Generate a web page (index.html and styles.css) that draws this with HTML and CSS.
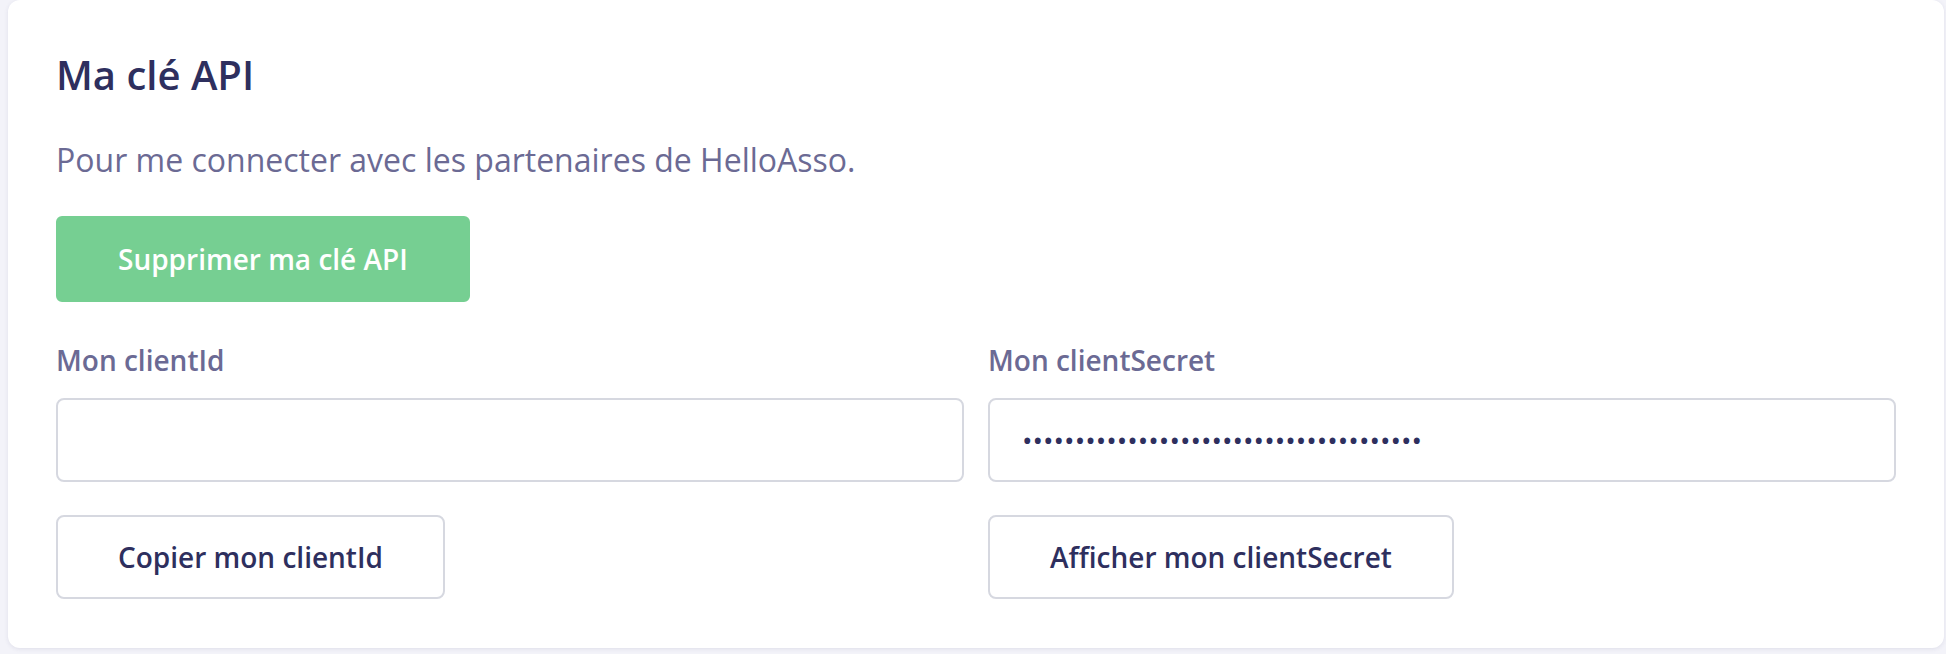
FILE: index.html
```html
<!DOCTYPE html>
<html lang="fr">
<head>
<meta charset="utf-8">
<title>Ma clé API</title>
<link rel="stylesheet" href="styles.css">
</head>
<body>
<div class="page">
  <section class="card">
    <h1 class="card-title">Ma clé API</h1>
    <p class="card-text">Pour me connecter avec les partenaires de HelloAsso.</p>
    <button class="btn btn-primary" type="button">Supprimer ma clé API</button>
    <div class="fields">
      <div class="field">
        <label class="field-label" for="clientId">Mon clientId</label>
        <input class="field-input" id="clientId" type="text" value="">
        <button class="btn btn-outline" type="button">Copier mon clientId</button>
      </div>
      <div class="field">
        <label class="field-label" for="clientSecret">Mon clientSecret</label>
        <input class="field-input" id="clientSecret" type="password" value="abcdefghijklmnopqrstuvwxyz0123456789AB">
        <button class="btn btn-outline" type="button">Afficher mon clientSecret</button>
      </div>
    </div>
  </section>
</div>
</body>
</html>
```

FILE: styles.css
```css
* {
  box-sizing: border-box;
}

html, body {
  margin: 0;
  padding: 0;
}

body {
  background: #f3f3f9;
  font-family: "Open Sans", "Noto Sans", sans-serif;
  color: #2e2f5e;
}

.page {
  padding: 0 2px 6px 8px;
}

.card {
  background: #ffffff;
  border-radius: 12px;
  box-shadow: 0 1px 4px rgba(46, 47, 94, 0.10);
  padding: 48px 48px 49px 48px;
  height: 648px;
}

.card-title {
  margin: 0 0 36px;
  font-size: 40px;
  line-height: 54px;
  font-weight: 600;
  color: #2e2f5e;
}

.card-text {
  margin: 0 0 34px;
  font-size: 32px;
  line-height: 44px;
  font-weight: 400;
  color: #6b6a94;
}

.btn {
  display: inline-flex;
  align-items: center;
  justify-content: center;
  font-family: "Open Sans", "Noto Sans", sans-serif;
  font-size: 28px;
  font-weight: 600;
  line-height: 38px;
  border-radius: 8px;
  border: 2px solid transparent;
  padding: 0 60px;
  cursor: pointer;
}

.btn-primary {
  height: 86px;
  background: #76cf92;
  border-color: #76cf92;
  color: #ffffff;
  border-radius: 6px;
}

.btn-outline {
  height: 84px;
  background: #ffffff;
  border-color: #d6d8e0;
  color: #2e2f5e;
  padding: 0 60px;
}

.fields {
  display: grid;
  grid-template-columns: 1fr 1fr;
  column-gap: 24px;
  margin-top: 39px;
}

.field {
  display: flex;
  flex-direction: column;
  align-items: flex-start;
}

.field-label {
  font-size: 28px;
  line-height: 38px;
  font-weight: 600;
  color: #6b6a94;
  margin-bottom: 19px;
}

.field-input {
  width: 100%;
  height: 84px;
  border: 2px solid #d6d8e0;
  border-radius: 8px;
  padding: 0 32px;
  font-family: "Open Sans", "Noto Sans", sans-serif;
  font-size: 28px;
  color: #2e2f5e;
  background: #ffffff;
  outline: none;
  margin-bottom: 33px;
}
```
